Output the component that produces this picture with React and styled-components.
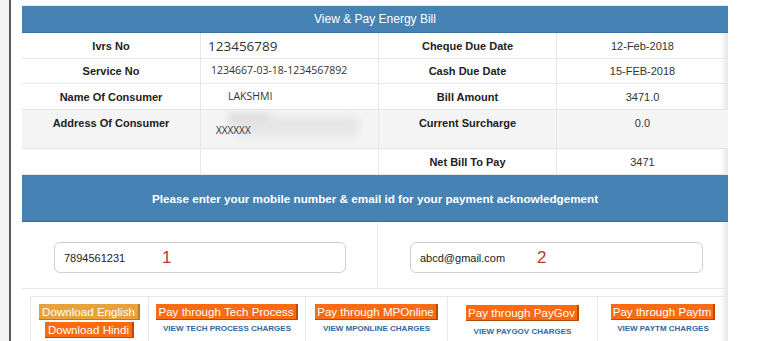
import React from "react";
import styled, { createGlobalStyle } from "styled-components";

const Global = createGlobalStyle`
  html, body { margin: 0; padding: 0; background: #fff; }
  body { font-family: "Liberation Sans", Arial, sans-serif; color: #333; }
`;

const Page = styled.div`
  display: flex;
  width: 765px;
  height: 341px;
  overflow: hidden;
  background: #fff;
`;

const SideStrip = styled.div`
  width: 9px;
  flex: none;
  background: #f4f4f4;
  border-right: 2px solid #5a5a5a;
`;

const Main = styled.div`
  flex: none;
  width: 706px;
  margin-left: 11px;
  padding-top: 5px;
`;

const Panel = styled.div`
  border-top: 1px solid #e4eaf0;
`;

const Header = styled.div`
  height: 26px;
  background: #4682b4;
  border-bottom: 1px solid #3c72a0;
  color: #fff;
  font-size: 12px;
  display: flex;
  align-items: center;
  justify-content: center;
`;

const Body = styled.div`
  box-shadow: inset -7px 0 5px -3px rgba(0, 0, 0, 0.1);
`;

const Grid = styled.div`
  display: grid;
  grid-template-columns: 179px 178px 178px 171px;
  grid-template-rows: 26px 25px 26px 39px 26px;
`;

const Cell = styled.div`
  position: relative;
  border-bottom: 1px solid #e6e6e6;
  border-right: ${(p) => (p.$last ? "none" : "1px solid #e6e6e6")};
  background: ${(p) => (p.$shade ? "#f4f4f4" : "transparent")};
  display: flex;
  align-items: ${(p) => (p.$top ? "flex-start" : "center")};
  justify-content: ${(p) => (p.$left ? "flex-start" : "center")};
  padding-top: ${(p) => (p.$top ? "7px" : "0")};
  padding-left: ${(p) => p.$indent || 0}px;
  box-sizing: border-box;
  font-size: 11px;
`;

const Label = styled.span`
  font-weight: bold;
  color: #222;
`;

const Value = styled.span`
  font-family: "Open Sans", "Liberation Sans", sans-serif;
  font-size: ${(p) => p.$size || 11}px;
  color: #333;
  position: relative;
  top: ${(p) => p.$shift || 0}px;
`;

const PlainValue = styled.span`
  font-size: 11px;
  color: #333;
`;

const Smear = styled.div`
  position: absolute;
  left: 30px;
  top: 6px;
  width: 128px;
  height: 20px;
  background: #e0e0e0;
  filter: blur(4px);
  opacity: 0.7;
`;

const SmearSpot = styled.div`
  position: absolute;
  left: 28px;
  top: 3px;
  width: 40px;
  height: 10px;
  background: #dadada;
  filter: blur(3px);
  opacity: 0.8;
`;

const Band = styled.div`
  height: 46px;
  background: #4682b4;
  border-bottom: 1px solid #3c6e9a;
  color: #fff;
  font-weight: bold;
  font-size: 11.7px;
  display: flex;
  align-items: center;
  justify-content: center;
`;

const InputRow = styled.div`
  display: grid;
  grid-template-columns: 356px 350px;
  border-bottom: 1px solid #e8e8e8;
`;

const InputCell = styled.div`
  padding: 20px 0 15px 32px;
  border-right: ${(p) => (p.$last ? "none" : "1px solid #ececec")};
`;

const InputWrap = styled.div`
  position: relative;
  width: ${(p) => p.$w}px;
`;

const TextInput = styled.input`
  box-sizing: border-box;
  width: 100%;
  height: 31px;
  border: 1px solid #cfcfcf;
  border-radius: 6px;
  padding: 0 9px;
  font-family: "Liberation Sans", Arial, sans-serif;
  font-size: 11px;
  color: #222;
  background: #fff;
  outline: none;
`;

const Mark = styled.span`
  position: absolute;
  left: ${(p) => p.$x}px;
  top: 6px;
  font-size: 17px;
  color: #c0392b;
  pointer-events: none;
`;

const PayRow = styled.div`
  display: grid;
  grid-template-columns: 118px 157px 142px 150px 131px;
  margin: 7px 0 0 8px;
  border-top: 1px solid #e8e8e8;
  height: 50px;
`;

const PayCell = styled.div`
  border-left: 1px solid #e8e8e8;
  display: flex;
  flex-direction: column;
  align-items: center;
  padding-top: ${(p) => p.$pt || 7}px;
  gap: ${(p) => p.$gap || 4}px;
`;

const OrangeButton = styled.button`
  font-family: "Liberation Sans", Arial, sans-serif;
  font-size: 11.6px;
  line-height: 15px;
  height: 16px;
  padding: 0 ${(p) => p.$px || 2}px;
  border: none;
  border-right: 2px solid ${(p) => (p.$light ? "#b97a24" : "#b84a06")};
  border-bottom: 1px solid ${(p) => (p.$light ? "#b97a24" : "#b84a06")};
  background: ${(p) => (p.$light ? "#e8a23c" : "#fc6a12")};
  color: #fff;
  cursor: pointer;
  white-space: nowrap;
`;

const ChargesLink = styled.a`
  font-size: 8px;
  font-weight: bold;
  color: #2d6aa3;
  text-decoration: none;
  white-space: nowrap;
`;

export default function App() {
  return (
    <>
      <Global />
      <Page>
        <SideStrip />
        <Main>
          <Panel>
            <Header>View &amp; Pay Energy Bill</Header>
            <Body>
              <Grid>
                <Cell><Label>Ivrs No</Label></Cell>
                <Cell $left $indent={7}><Value $size={13.5}>123456789</Value></Cell>
                <Cell><Label>Cheque Due Date</Label></Cell>
                <Cell $last><PlainValue>12-Feb-2018</PlainValue></Cell>

                <Cell><Label>Service No</Label></Cell>
                <Cell $left $indent={10}><Value $size={10.5} $shift={-1}>1234667-03-18-1234567892</Value></Cell>
                <Cell><Label>Cash Due Date</Label></Cell>
                <Cell $last><PlainValue>15-FEB-2018</PlainValue></Cell>

                <Cell><Label>Name Of Consumer</Label></Cell>
                <Cell $left $indent={27}><Value $size={10.5} $shift={-1}>LAKSHMI</Value></Cell>
                <Cell><Label>Bill Amount</Label></Cell>
                <Cell $last><PlainValue>3471.0</PlainValue></Cell>

                <Cell $shade $top><Label>Address Of Consumer</Label></Cell>
                <Cell $shade $top $left $indent={15}>
                  <SmearSpot />
                  <Smear />
                  <Value $size={10} $shift={6}>XXXXXX</Value>
                </Cell>
                <Cell $shade $top><Label>Current Surcharge</Label></Cell>
                <Cell $shade $top $last><PlainValue>0.0</PlainValue></Cell>

                <Cell />
                <Cell />
                <Cell><Label>Net Bill To Pay</Label></Cell>
                <Cell $last><PlainValue>3471</PlainValue></Cell>
              </Grid>
              <Band>Please enter your mobile number &amp; email id for your payment acknowledgement</Band>
              <InputRow>
                <InputCell>
                  <InputWrap $w={292}>
                    <TextInput readOnly value="7894561231" />
                    <Mark $x={108}>1</Mark>
                  </InputWrap>
                </InputCell>
                <InputCell $last>
                  <InputWrap $w={293}>
                    <TextInput readOnly value="abcd@gmail.com" />
                    <Mark $x={127}>2</Mark>
                  </InputWrap>
                </InputCell>
              </InputRow>
              <PayRow>
                <PayCell $gap={2}>
                  <OrangeButton $light $px={3}>Download English</OrangeButton>
                  <OrangeButton $px={3}>Download Hindi</OrangeButton>
                </PayCell>
                <PayCell>
                  <OrangeButton>Pay through Tech Process</OrangeButton>
                  <ChargesLink href="#">VIEW TECH PROCESS CHARGES</ChargesLink>
                </PayCell>
                <PayCell>
                  <OrangeButton>Pay through MPOnline</OrangeButton>
                  <ChargesLink href="#">VIEW MPONLINE CHARGES</ChargesLink>
                </PayCell>
                <PayCell $pt={8} $gap={6}>
                  <OrangeButton>Pay through PayGov</OrangeButton>
                  <ChargesLink href="#">VIEW PAYGOV CHARGES</ChargesLink>
                </PayCell>
                <PayCell>
                  <OrangeButton>Pay through Paytm</OrangeButton>
                  <ChargesLink href="#">VIEW PAYTM CHARGES</ChargesLink>
                </PayCell>
              </PayRow>
            </Body>
          </Panel>
        </Main>
      </Page>
    </>
  );
}
